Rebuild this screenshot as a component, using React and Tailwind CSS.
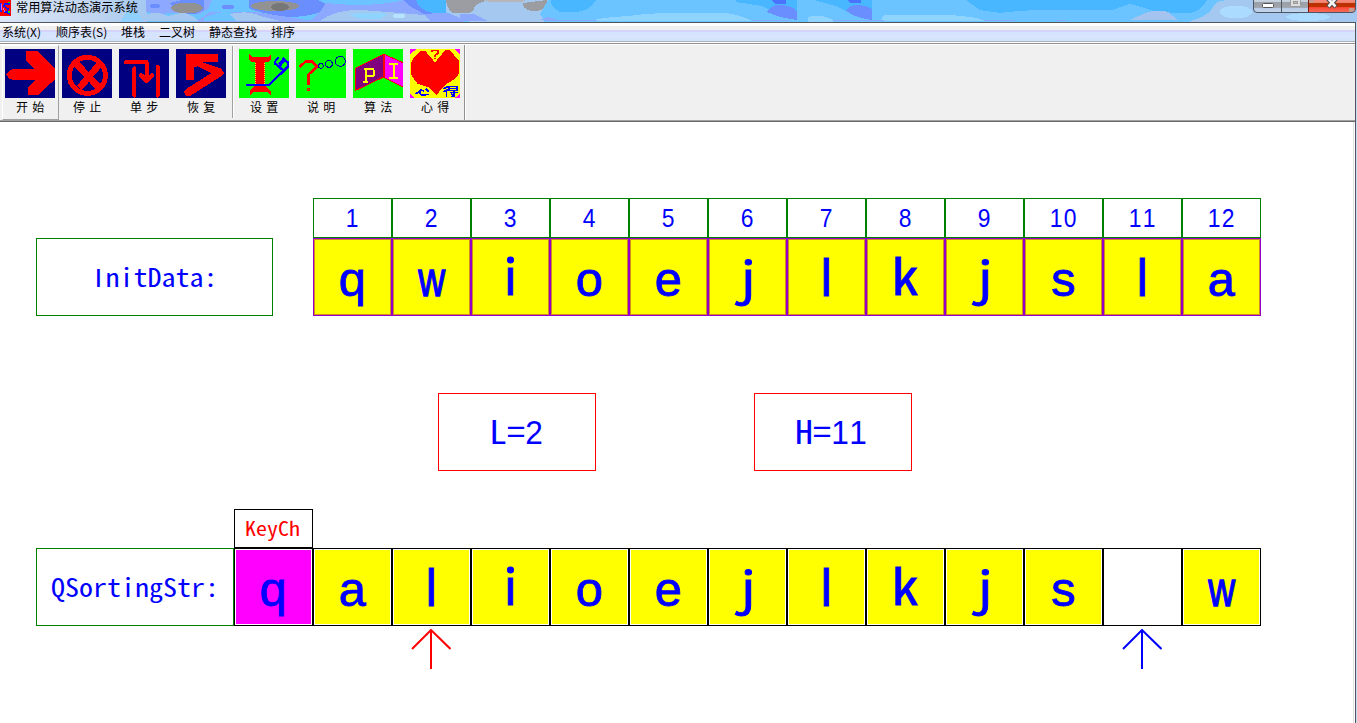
import React from "react";

const HEI = "font-['Noto_Sans_CJK_SC','Liberation_Sans',sans-serif] [font-feature-settings:'hwid']";

const MENUS = ["系统(X)", "顺序表(S)", "堆栈", "二叉树", "静态查找", "排序"];
const MENU_WIDTHS = ["w-[54px]", "w-[65px]", "w-[38px]", "w-[50px]", "w-[62px]", "w-[40px]"];
const INIT = "qwioejlkjsla".split("");
const SORTING = "alioejlkjs w".split("");

function TitleArt() {
  return (
    <svg className="absolute inset-0" width="1357" height="22" viewBox="0 0 1357 22" shapeRendering="crispEdges">
      <defs>
        <linearGradient id="glow" x1="0" x2="1" y1="0" y2="0">
          <stop offset="0" stopColor="#dce7f7" />
          <stop offset="0.6" stopColor="#c3d6f1" />
          <stop offset="1" stopColor="#a4c8f0" />
        </linearGradient>
      </defs>
      <rect width="1357" height="22" fill="#6bc3ff" />
      <rect width="147" height="22" fill="url(#glow)" />
      <path d="M128 10Q138 10 144 22H120Z" fill="#8fd0ff" />
      <path d="M146 0H212L208 9L200 14L172 13L160 14L146 12Z" fill="#8ca8ff" />
      <ellipse cx="155" cy="6" rx="5" ry="2.5" fill="#6b8eff" />
      <path d="M170 3L182 0H204V10L196 14L178 13Z" fill="#6b8eff" />
      <ellipse cx="187" cy="8" rx="16" ry="5.5" fill="#929292" />
      <path d="M146 15Q155 10 168 16L180 13Q192 13 198 21H146Z" fill="#a4c8f0" />
      <path d="M210 12H256L300 19L320 22H196Z" fill="#8ca8ff" />
      <path d="M204 18Q220 10 234 13Q254 12 262 21H204Z" fill="#6bc3ff" />
      <path d="M230 14Q250 10 260 16L280 21H236Z" fill="#a4c8f0" />
      <ellipse cx="228" cy="7" rx="6" ry="2.5" fill="#6b8eff" />
      <path d="M249 0H318Q334 6 322 12Q306 17 288 17Q258 13 249 8Z" fill="#6b8eff" />
      <ellipse cx="275" cy="6" rx="24" ry="5" fill="#929292" />
      <ellipse cx="280" cy="7" rx="9" ry="4" fill="#777777" />
      <path d="M326 3Q370 8 405 0H420L432 10L450 14H464V22H308Q320 14 326 3Z" fill="#8ca8ff" />
      <path d="M320 21Q336 9 362 10L400 13L424 15L430 21Z" fill="#a4c8f0" />
      <path d="M350 14Q375 11 388 14L380 19Q354 20 350 14Z" fill="#8fd3ff" />
      <ellipse cx="399" cy="16" rx="6" ry="2.5" fill="#b5e3ff" />
      <path d="M404 0H424L432 14H424L408 5Z" fill="#6b8eff" />
      <path d="M416 0H450L446 13H432Q418 9 416 0Z" fill="#48b7ff" />
      <path d="M446 0H548L544 22H470L446 12Z" fill="#a4c8f0" />
      <path d="M446 0H490Q474 3 474 9Q472 13 466 13H452Q447 8 446 0Z" fill="#9c9ca3" />
      <path d="M482 0H526Q522 3 510 2H490Z" fill="#b5b5ba" />
      <path d="M460 14H474L488 21H460Z" fill="#8ca8ff" />
      <path d="M523 3Q530 2 547 0Q547 11 535 11Q525 11 523 5Z" fill="#9c9ca3" />
      <path d="M548 0H820V22H545L540 14Z" fill="#6bc3ff" />
      <path d="M551 0H596Q590 11 576 12H560Q550 6 551 0Z" fill="#48b7ff" />
      <path d="M594 20Q605 17 630 16Q645 13 680 13H726Q744 16 752 21H594Z" fill="#8fd3ff" />
      <path d="M540 20L548 17L560 21Z" fill="#8ca8ff" />
      <path d="M736 0H797V18Q780 16 762 6L736 2Z" fill="#48b7ff" />
      <path d="M771 0H786V4H775Z" fill="#4a73ff" />
      <path d="M767 12Q772 4 782 5Q792 6 797 11V20Q780 18 767 12Z" fill="#6b8eff" />
      <path d="M814 0H872V18Q850 14 836 6Z" fill="#48b7ff" />
      <path d="M848 0H861V3H850Z" fill="#4a73ff" />
      <path d="M846 11Q850 4 859 5Q868 6 872 9V20Q856 18 846 11Z" fill="#6b8eff" />
      <path d="M808 17Q820 13 833 20V22H808Z" fill="#8fd3ff" />
      <path d="M884 15H940Q970 15 986 21H880Z" fill="#8fd3ff" />
      <path d="M966 0H1207Q1200 13 1188 13H1160Q1142 7 1130 4Q1120 7 1113 10H1068Q1030 9 1000 13L980 10Z" fill="#48b7ff" />
      <path d="M1130 20L1145 13Q1158 9 1168 12L1178 20Z" fill="#a4c3ee" />
      <path d="M1190 21Q1210 16 1214 5Q1218 0 1230 0H1357V22H1190Z" fill="#a4c8f0" />
      <ellipse cx="1236" cy="12" rx="16" ry="6.5" fill="#abdcff" />
      <ellipse cx="1308" cy="17" rx="22" ry="4" fill="#abdcff" />
      <path d="M752 20H790V21H752ZM833 20H884V21H833ZM984 20H1015V21H984ZM1056 20H1066V21H1056ZM545 20H597V21H545Z" fill="#8ca8ff" />
    </svg>
  );
}

function AppIcon() {
  return (
    <svg width="11" height="16" viewBox="0 0 11 16" shapeRendering="crispEdges">
      <path d="M0 0H11V16H0Z" fill="#f00" />
      <path d="M8 2H10V5H8ZM8 11H10V14H8Z" fill="#0d0" />
      <path d="M0 3H2V12H0Z" fill="#22f" />
      <path d="M8 4H5L4 6L8 9L7 12H4M9 3V5M7 13L10 14" stroke="#11f" fill="none" strokeWidth="1.6" />
      <path d="M1 4V10M3 8L5 12" stroke="#d6f" fill="none" />
    </svg>
  );
}

function WindowButtons() {
  return (
    <svg className="absolute right-0 top-0" width="104" height="14" viewBox="1253 0 104 14">
      <defs>
        <linearGradient id="grayBtn" x1="0" x2="0" y1="0" y2="1">
          <stop offset="0" stopColor="#cfdbe9" />
          <stop offset="0.25" stopColor="#c4cfdc" />
          <stop offset="0.28" stopColor="#9aa0a8" />
          <stop offset="0.65" stopColor="#a0a4ab" />
          <stop offset="0.7" stopColor="#b7cbe4" />
          <stop offset="1" stopColor="#c3d6ef" />
        </linearGradient>
        <linearGradient id="redBtn" x1="0" x2="0" y1="0" y2="1">
          <stop offset="0" stopColor="#f79484" />
          <stop offset="0.34" stopColor="#f08070" />
          <stop offset="0.38" stopColor="#b93000" />
          <stop offset="0.62" stopColor="#c03000" />
          <stop offset="0.66" stopColor="#ff4a3a" />
          <stop offset="1" stopColor="#f0705a" />
        </linearGradient>
      </defs>
      <path d="M1253.5 -2V9Q1253.5 12.5 1257 12.5H1352Q1355.5 12.5 1355.5 9V-2Z" fill="url(#grayBtn)" />
      <path d="M1308.5 -2V12.5H1352Q1355 12 1355 9V-2Z" fill="url(#redBtn)" />
      <path d="M1309 0H1314V3H1309ZM1349 8H1354V12H1349Z" fill="#c69a8d" />
      <path d="M1253.5 -1V9Q1253.5 12.5 1257 12.5H1352Q1355.5 12.5 1355.5 9V-1M1281.5 0V12" fill="none" stroke="#4c5561" />
      <path d="M1308.5 0V12" stroke="#7b1c0b" />
      <rect x="1262.5" y="3.5" width="11" height="4" rx="1" fill="#fff" stroke="#555" />
      <rect x="1290.5" y="-.5" width="10" height="7" rx="1" fill="#dedede" stroke="#999" />
      <rect x="1293.5" y="1.500" width="4" height="2" fill="#bbb" stroke="#999" />
      <path d="M1328 -1L1336 7M1336 -1L1328 7" stroke="#4a4a4a" strokeWidth="4.500" />
      <path d="M1328.500 -1L1335.500 6.500M1335.500 -1L1328.500 6.500" stroke="#f4f4f4" strokeWidth="2.600" />
    </svg>
  );
}

const iconProps = { width: 50, height: 49, shapeRendering: "crispEdges", fill: "none" };

function StartIcon() {
  return (
    <svg {...iconProps} viewBox="15 147 150 147">
      <path d="M15 147h150v147H15z" fill="#000080" />
      <path d="M18 224L27 213L40 207H105L78 183V153H111L165 205V238L114 285H84V261L105 240H40L27 235Z" fill="#f00" />
    </svg>
  );
}
function StopIcon() {
  return (
    <svg {...iconProps} viewBox="186 147 150 147">
      <path d="M186 147h150v147H186z" fill="#000080" />
      <circle cx="262" cy="226" r="54" stroke="#f00" strokeWidth="15" />
      <path d="M228 190L298 264M296 196L238 264" stroke="#f00" strokeWidth="20" />
    </svg>
  );
}
function StepIcon() {
  return (
    <svg {...iconProps} viewBox="357 147 150 147">
      <path d="M357 147h150v147H357z" fill="#000080" />
      <path d="M378 186H440V238M403 205V287M473 200V287" stroke="#f00" strokeWidth="12" strokeLinecap="round" strokeLinejoin="round" />
      <path d="M424 227L440 242L456 226" stroke="#f00" strokeWidth="14" strokeLinecap="round" strokeLinejoin="round" />
    </svg>
  );
}
function ResumeIcon() {
  return (
    <svg {...iconProps} viewBox="528 147 150 147">
      <path d="M528 147h150v147H528z" fill="#000080" />
      <path d="M558 161H654V186H605L663 205L672 218L668 226L570 288H558L552 276L560 266L634 219L594 199L582 203V240H558Z" fill="#f00" />
    </svg>
  );
}
function SettingsIcon() {
  return (
    <svg {...iconProps} viewBox="27 147 150 147">
      <path d="M27 147h150v147H27z" fill="#0f0" />
      <path d="M57 162L66 171H114L123 162V180L114 187H105V258L117 267L124 275V286L112 276H70L60 286V272L66 264L75 258V187H66L57 180Z" fill="#f00" />
      <path d="M77 188V258M104 188V258" stroke="#ff0" strokeWidth="3" strokeDasharray="3 3" />
      <path d="M48 254H118L174 200V187L146 172" stroke="#00f" strokeWidth="7" />
      <path d="M135 190L163 214M147 200L166 178" stroke="#00f" strokeWidth="7" />
      <path d="M143 160H160L166 170L150 182H143Z" fill="#0f0" />
      <path d="M146 192L164 173M145 172L136 184V194M158 173L175 188" stroke="#00f" strokeWidth="6" />
    </svg>
  );
}
function HelpIcon() {
  return (
    <svg {...iconProps} viewBox="198 147 150 147">
      <path d="M198 147h150v147H198z" fill="#0f0" />
      <path d="M208 201L228 184H247L261 200L236 223V255" stroke="#f00" strokeWidth="8" />
      <path d="M233 265h6v6h-6z" stroke="#f00" strokeWidth="3" />
      <g stroke="#0000a8" strokeWidth="3">
        <circle cx="273" cy="198" r="7" />
        <circle cx="297" cy="192" r="10" />
        <circle cx="331" cy="184" r="15" />
      </g>
    </svg>
  );
}
function AlgorithmIcon() {
  return (
    <svg {...iconProps} viewBox="369 147 150 147">
      <path d="M369 147h150v147H369z" fill="#0f0" />
      <path d="M377 205L461 163V231L377 271Z" fill="#800080" stroke="#f00" strokeWidth="3" />
      <path d="M463 163L519 188V261L463 233Z" fill="#f0f" stroke="#f00" strokeWidth="3" />
      <path d="M463 163V233" stroke="#f00" strokeWidth="5" />
      <path d="M401 207H428L431 211V226L428 229H407M408 207V247M400 247H414M477 192H504M477 233H504M491 190V233" stroke="#ff0" strokeWidth="6" />
    </svg>
  );
}
function HeartIcon() {
  return (
    <svg {...iconProps} viewBox="540 147 150 147">
      <path d="M540 147h150v147H540z" fill="#ff0" />
      <path d="M540 147H560L540 162ZM672 147H690V164ZM540 282V294H552ZM690 282V294H674Z" fill="#f0f" />
      <path d="M615 187L646 150H658L687 181V221L676 236L646 254L619 285L600 264L562 251L542 222V190L551 173L572 153H586Z" fill="#f00" />
      <path d="M605 156V151H623V160L614 167V171M614 174V178" stroke="#f00" strokeWidth="5" />
      <path d="M557 282L570 272V280L576 286L597 283M573 270L582 274M587 266L597 276M640 266L658 258M640 275L657 268M650 268V292M656 260H681V272H657V260M657 266H681M660 278H684M672 274V290H663M663 282L670 286" stroke="#00f" strokeWidth="4.500" />
    </svg>
  );
}

const RUN_TOOLS = [
  ["开 始", StartIcon],
  ["停 止", StopIcon],
  ["单 步", StepIcon],
  ["恢 复", ResumeIcon],
];
const INFO_TOOLS = [
  ["设 置", SettingsIcon],
  ["说 明", HelpIcon],
  ["算 法", AlgorithmIcon],
  ["心 得", HeartIcon],
];

function ToolButton({ label, Icon, raised }) {
  return (
    <button
      className={
        "flex h-[75px] w-[57px] flex-col items-start border pt-[3px] pl-[2px] " +
        (raised ? "border-t-white border-l-white border-r-[#a0a0a0] border-b-[#a0a0a0]" : "border-transparent")
      }
    >
      <Icon />
      <span className="mt-px w-[51px] text-center whitespace-pre text-[12px] leading-[16px] tracking-[0.7px]">{label}</span>
    </button>
  );
}

// Per-glyph face, size and width; anything unlisted uses the plain sans face.
const GLYPH_STYLE = {
  w: "font-['Liberation_Sans',sans-serif] text-[49px] scale-x-[0.76] [-webkit-text-stroke:1.4px_#0000ff]",
  j: "text-[46px] scale-x-[1.1] -translate-y-[4px]",
  i: "text-[49px] -translate-y-[5px]",
  k: "text-[49px] scale-x-[1.1] -translate-y-[5px]",
  l: "font-['Liberation_Sans',sans-serif] text-[51px]",
};

function Cell({ children, tone }) {
  const tones = {
    init: "border-[#9400c8] bg-[#ffff00] shadow-[inset_0_0_0_1px_#d08a20]",
    sorted: "border-black bg-[#ffff00] shadow-[inset_0_0_0_1px_#ffffff]",
    key: "border-black bg-[#ff00ff] shadow-[inset_0_0_0_1px_#ffffff]",
    hole: "border-black bg-white",
  };
  const glyph = GLYPH_STYLE[children] || "font-['Liberation_Sans',sans-serif] text-[49px]";
  return (
    <div className={"flex h-[78px] w-[79px] shrink-0 items-start justify-center border leading-[80px] text-[#0000ff] [-webkit-text-stroke:0.9px_#0000ff] " + tones[tone]}>
      {children !== " " && <span className={"inline-block " + glyph}>{children}</span>}
    </div>
  );
}

// Digits on a fixed pitch of half an em.
function Digits({ value, pitch }) {
  return String(value)
    .split("")
    .map((d, i) => (
      <span key={i} className={"inline-flex scale-x-[0.88] justify-center font-['Liberation_Sans',sans-serif] " + pitch}>
        {d}
      </span>
    ));
}

function Arrow({ color }) {
  return (
    <svg width="40" height="40" viewBox="0 0 40 40" fill="none" stroke={color} strokeWidth="2">
      <path d="M20 1V40" shapeRendering="crispEdges" />
      <path d="M1 20L20 1L39.500 20" />
    </svg>
  );
}

export default function App() {
  return (
    <div className="flex h-[723px] w-[1357px] flex-col overflow-hidden bg-white font-['Noto_Sans_CJK_SC','Liberation_Sans',sans-serif] text-black">
      <header className="relative h-[22px] shrink-0 border-b border-[#dceafa]">
        <TitleArt />
        <div className="relative flex h-[16px] items-start gap-[5px]">
          <AppIcon />
          <h1 className="text-[12.2px] leading-[14px] whitespace-nowrap">常用算法动态演示系统</h1>
        </div>
        <WindowButtons />
      </header>
      <div className="flex min-h-0 flex-1 bg-[#c5dcf5] pr-px">
        <div className="flex flex-1 flex-col border-t border-r border-[#4f565e] bg-white">
          <nav className="flex h-[19px] shrink-0 border-b border-[#a9b0b8] bg-[linear-gradient(#fff_0_3px,#f0f0f0_3px_7px,#d6d3fb_7px_9px,#d5e3ff_9px_14px,#dbe4f8_14px_15px,#d2e4fb_15px)] pt-px pl-[2px]">
            {MENUS.map((m, i) => (
              <span key={m} className={"text-[12px] leading-[16px] whitespace-nowrap " + MENU_WIDTHS[i]}>
                {m}
              </span>
            ))}
          </nav>
          <div className="mt-px flex h-[79px] shrink-0 border-t border-b border-t-[#909090] border-b-[#696969] bg-[#f0f0f0] pt-px shadow-[inset_0_1px_0_#fff,inset_0_-1px_0_#a0a0a0]">
            <div className="flex pl-[2px]">
              {RUN_TOOLS.map(([label, Icon], i) => (
                <ToolButton key={label} label={label} Icon={Icon} raised={i === 0} />
              ))}
            </div>
            <div className="mx-[2px] mt-[1px] h-[72px] w-[2px] border-l border-[#a0a0a0] bg-white" />
            <div className="flex">
              {INFO_TOOLS.map(([label, Icon]) => (
                <ToolButton key={label} label={label} Icon={Icon} />
              ))}
            </div>
            <div className="h-[75px] w-[2px] border-l border-[#909090] bg-white" />
          </div>
          <main className={"mr-px flex-1 border-r border-[#e3e3e3] pt-[76px] " + HEI}>
            <div className="flex pl-[313px]">
              {INIT.map((_, i) => (
                <div key={i} className="flex h-[40px] w-[79px] shrink-0 items-center justify-center border border-[#008000] pr-[2px] text-[26px] leading-none text-[#0000ff]">
                  <Digits value={i + 1} pitch="w-[14px]" />
                </div>
              ))}
            </div>
            <div className="flex pl-[36px]">
              <div className="mr-[40px] flex h-[78px] w-[237px] shrink-0 items-center justify-center border border-[#008000] text-[28px] leading-none text-[#0000ff]">
                <span className="inline-block scale-y-[0.91]">
                  <span className="inline-block w-[14px] text-center font-['Liberation_Sans',sans-serif]">I</span>nitData:
                </span>
              </div>
              {INIT.map((c, i) => (
                <Cell key={i} tone="init">{c}</Cell>
              ))}
            </div>
            <div className="mt-[77px] flex gap-[158px] pl-[438px] text-[36px] leading-none text-[#0000ff]">
              <div className="flex h-[78px] w-[158px] items-center justify-center border border-[#ff0000] pr-[2px] pb-[2px]">
                <span className="inline-block scale-y-[0.92]">
                  L=<Digits value={2} pitch="w-[18px]" />
                </span>
              </div>
              <div className="flex h-[78px] w-[158px] items-center justify-center border border-[#ff0000] pr-[4px] pb-[2px]">
                <span className="inline-block scale-y-[0.92]">
                  H=<Digits value={11} pitch="w-[18px]" />
                </span>
              </div>
            </div>
            <div className="mt-[38px] ml-[234px] flex h-[39px] w-[79px] items-center justify-center border border-black pr-[2px] pb-[3px] text-[22px] leading-none text-[#ff0000]">
              <span className="inline-block scale-y-[0.91]">KeyCh</span>
            </div>
            <div className="flex pl-[36px]">
              <div className="flex h-[78px] w-[198px] shrink-0 items-center justify-center border border-[#008000] pb-[2px] text-[28px] leading-none text-[#0000ff]">
                <span className="inline-block scale-y-[0.91]">QSortingStr:</span>
              </div>
              <Cell tone="key">q</Cell>
              {SORTING.map((c, i) => (
                <Cell key={i} tone={c === " " ? "hole" : "sorted"}>{c}</Cell>
              ))}
            </div>
            <div className="mt-[3px] flex gap-[671px] pl-[411px]">
              <Arrow color="#ff0000" />
              <Arrow color="#0000ff" />
            </div>
          </main>
        </div>
      </div>
    </div>
  );
}
